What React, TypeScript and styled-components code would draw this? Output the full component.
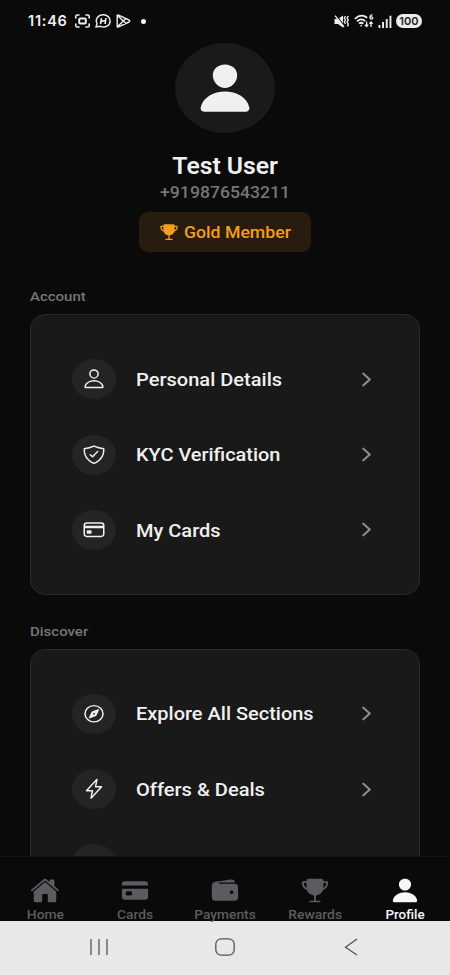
import React from "react";
import styled, { createGlobalStyle } from "styled-components";
import type { IconType } from "react-icons";
import {
  IoPerson, IoTrophy, IoHome, IoCard, IoWallet, IoPersonOutline,
  IoShieldCheckmarkOutline, IoCardOutline, IoCompassOutline, IoFlashOutline,
  IoChevronForward,
} from "react-icons/io5";

const GlobalStyle = createGlobalStyle`
  * { box-sizing: border-box; }
  body { margin: 0; background: #0a0a0a; overflow: hidden; }
`;

const Screen = styled.div`
  width: 450px;
  height: 975px;
  display: flex;
  flex-direction: column;
  overflow: hidden;
  background: #0a0a0a;
  color: #f0f0f0;
  font-family: Roboto, sans-serif;
`;

const StatusBar = styled.header`
  flex: none;
  height: 42px;
  padding: 0 28px;
  display: flex;
  align-items: center;
  justify-content: space-between;
`;

const StatusGroup = styled.div<{ $gap: number }>`
  display: flex;
  align-items: center;
  gap: ${(p) => p.$gap}px;
`;

const Clock = styled.span`
  width: 42px;
  font: 600 14.5px/16px Inter, sans-serif;
  letter-spacing: 0.75px;
  white-space: nowrap;
`;

const Dot = styled.i`
  width: 5px;
  height: 5px;
  margin-left: 5px;
  border-radius: 50%;
  background: #f5f5f5;
`;

const Battery = styled.span`
  width: 26px;
  height: 14px;
  border-radius: 7px;
  background: #ececec;
  color: #222;
  font: 600 11px/14px Inter, sans-serif;
  letter-spacing: 0.1px;
  text-align: center;
`;

const Content = styled.main`
  flex: none;
  height: 814px;
  overflow: hidden;
`;

const Profile = styled.section`
  height: 244px;
  padding-top: 1px;
  display: flex;
  flex-direction: column;
  align-items: center;
`;

const Avatar = styled.div`
  width: 100px;
  height: 90px;
  display: flex;
  align-items: center;
  justify-content: center;
  border-radius: 50%;
  background: #1a1a1a;
`;

const Glyph = styled.svg<{ $w: number; $h: number }>`
  flex: none;
  display: block;
  width: ${(p) => p.$w}px;
  height: ${(p) => p.$h}px;
`;

const Label = styled.span<{ $size: number; $stretch: number; $left?: boolean }>`
  display: block;
  font-size: ${(p) => p.$size}px;
  white-space: nowrap;
  transform: scaleX(${(p) => p.$stretch});
  transform-origin: ${(p) => (p.$left ? "left" : "center")} center;
`;

const UserName = styled(Label)`
  margin-top: 19px;
  line-height: 30px;
  font-weight: 600;
`;

const Phone = styled(Label)`
  line-height: 20px;
  margin-top: 1px;
  color: #76767a;
  font-weight: 500;
`;

const Badge = styled.div`
  width: 172px;
  height: 40px;
  margin-top: 9px;
  padding-left: 20px;
  display: flex;
  align-items: center;
  gap: 5px;
  border-radius: 9px;
  background: #271c0d;
  color: #f59e1b;
  font-weight: 500;
`;

const Section = styled.section`
  padding: 0 30px;
  margin-bottom: 25.5px;
`;

const SectionTitle = styled(Label)`
  line-height: 20px;
  margin-bottom: 8px;
  color: #76767a;
  font-weight: 500;
`;

const Card = styled.div`
  height: 281px;
  padding: 26.5px 41.5px 0 41px;
  border: 1px solid #292929;
  border-radius: 15px;
  background: #191919;
`;

const Row = styled.div`
  height: 75.4px;
  display: flex;
  align-items: center;
  font-weight: 500;
`;

const RowLabel = styled(Label)`
  padding-top: 1.5px;
`;

const IconCircle = styled.span`
  width: 44px;
  height: 40px;
  margin-right: 20px;
  display: flex;
  align-items: center;
  justify-content: center;
  border-radius: 50%;
  background: #242424;

  svg {
    stroke-width: 8px;
  }
`;

const Chevron = styled.span`
  margin-left: auto;
  color: #8f8f90;
`;

const TabBar = styled.nav`
  flex: none;
  height: 65px;
  padding-top: 20px;
  display: grid;
  grid-template-columns: repeat(5, 90px);
  background: #0a0a0a;
  border-top: 1px solid #141414;
`;

const Tab = styled.div<{ $active?: boolean }>`
  display: flex;
  flex-direction: column;
  align-items: center;
  gap: 3px;
  color: ${(p) => (p.$active ? "#f7f7f7" : "#5c5c60")};
  font-weight: 500;
  line-height: 15px;
`;

const SystemBar = styled.footer`
  flex: none;
  height: 54px;
  padding-bottom: 2px;
  display: grid;
  grid-template-columns: 36px repeat(3, 126px) 36px;
  align-items: center;
  justify-items: center;
  background: #e8e8e8;
`;

const SystemButton = styled.span<{ $col: number }>`
  grid-column: ${(p) => p.$col};
`;

interface ShapeProps { icon: IconType; w: number; h: number }
const Shape = ({ icon, w, h }: ShapeProps) => (
  <Glyph as={icon} $w={w} $h={h} preserveAspectRatio="none" />
);

interface Item { label: string; icon: IconType; stretch: number }
const account: Item[] = [
  { label: "Personal Details", icon: IoPersonOutline, stretch: 1.084 },
  { label: "KYC Verification", icon: IoShieldCheckmarkOutline, stretch: 1.076 },
  { label: "My Cards", icon: IoCardOutline, stretch: 1.082 },
];
const discover: Item[] = [
  { label: "Explore All Sections", icon: IoCompassOutline, stretch: 1.08 },
  { label: "Offers & Deals", icon: IoFlashOutline, stretch: 1.085 },
];
const tabs: Item[] = [
  { label: "Home", icon: IoHome, stretch: 1.065 },
  { label: "Cards", icon: IoCard, stretch: 1.06 },
  { label: "Payments", icon: IoWallet, stretch: 1.06 },
  { label: "Rewards", icon: IoTrophy, stretch: 1.07 },
  { label: "Profile", icon: IoPerson, stretch: 1.03 },
];

interface MenuProps { title: string; items: Item[]; more?: boolean }
const Menu = ({ title, items, more }: MenuProps) => (
  <Section>
    <SectionTitle $size={13.5} $stretch={1.11} $left>{title}</SectionTitle>
    <Card>
      {items.map((it) => (
        <Row key={it.label}>
          <IconCircle><Shape icon={it.icon} w={24} h={21.5} /></IconCircle>
          <RowLabel $size={18.5} $stretch={it.stretch} $left>{it.label}</RowLabel>
          <Chevron><Shape icon={IoChevronForward} w={23} h={21} /></Chevron>
        </Row>
      ))}
      {more && <Row><IconCircle /></Row>}
    </Card>
  </Section>
);

export default function App() {
  return (
    <Screen>
      <GlobalStyle />
      <StatusBar>
        <StatusGroup $gap={5}>
          <Clock>11:46</Clock>
          <Glyph $w={15} $h={14} viewBox="0 0 15 14" fill="none" stroke="#eee" strokeWidth="1.6" strokeLinecap="round">
            <path d="M.8 4V2.3Q.8 1 2.2 1H4M11 1h1.8q1.4 0 1.4 1.3V4M.8 10v1.7Q.8 13 2.2 13H4m7 0h1.8q1.4 0 1.4-1.3V10" />
            <rect x="4.2" y="4.6" width="6.6" height="4.8" rx="1" strokeWidth="2" />
          </Glyph>
          <Glyph $w={16} $h={14} viewBox="0 0 16 14" fill="none" stroke="#eee" strokeWidth="1.4">
            <path d="M1 13l1-3.5C-.2 5 3.2.8 8.3.8c4 0 6.8 2.8 6.8 6.2 0 4.6-5 7.4-9.6 5.3z" />
            <path d="M6.4 4L5.6 10M10.9 4l-.8 6M6 7.4l4.5-.9" strokeWidth="1.6" />
          </Glyph>
          <Glyph $w={15} $h={14} viewBox="0 0 15 14" fill="none" stroke="#eee" strokeWidth="1.4" strokeLinejoin="round">
            <path d="M1.2 1.2Q1.6.7 2.5 1.1L13 6q1.6 1 0 2L2.5 12.9q-.9.4-1.3-.1zM1.5 1.5L10 9.4M1.5 12.5L10 4.6" />
          </Glyph>
          <Dot />
        </StatusGroup>
        <StatusGroup $gap={4}>
          <Glyph $w={16} $h={13} viewBox="0 0 16 13" fill="#eee">
            <path d="M.5 4H4L9 .6v11.8L4 9H.5z" />
            <path d="M1.8 0L10.8 11.3" stroke="#0a0a0a" strokeWidth="1.2" />
            <path d="M1 .6L10 12" stroke="#eee" strokeWidth="1.3" />
            <path d="M11.5 1l-1.2 2 1.2 2-1.2 2 1.2 2M14.3 1l-1.2 2 1.2 2-1.2 2 1.2 2-.8 2.5" fill="none" stroke="#eee" strokeWidth="1.4" />
          </Glyph>
          <Glyph $w={20} $h={14} viewBox="0 0 20 14" fill="none" stroke="#eee" strokeWidth="1.7">
            <path d="M.8 4.8Q7-1 13.2 3.7M3 7.3q4.2-3.7 8.3-.1M5 9.7q2.2-1.9 4.4 0" />
            <circle cx="7.2" cy="11.6" r=".9" fill="#eee" stroke="none" />
            <path d="M18.6 1Q16 .5 15.9 3.7q.2 1.5 1.6 1.5 1.3-.1 1.3-1.3-.2-1.4-2.6-.8" strokeWidth="1.2" />
            <path d="M12.6 7.5v5M11 10.8l1.6 1.8 1.6-1.8M17 13V8m-1.6 1.8L17 8l1.6 1.8" strokeWidth="1.3" />
          </Glyph>
          <Glyph $w={14} $h={13} viewBox="0 0 14 13" fill="#eee">
            <path d="M.5 10h1.9v3H.5zM4.1 7H6v6H4.1zM7.8 4h1.9v9H7.8zM11.5.7h1.9V13h-1.9z" />
          </Glyph>
          <Battery>100</Battery>
        </StatusGroup>
      </StatusBar>
      <Content>
        <Profile>
          <Avatar><Shape icon={IoPerson} w={60} h={54} /></Avatar>
          <UserName $size={23} $stretch={1.075}>Test User</UserName>
          <Phone $size={16} $stretch={1.1}>+919876543211</Phone>
          <Badge>
            <Shape icon={IoTrophy} w={20} h={18} />
            <Label $size={16} $stretch={1.105} $left>Gold Member</Label>
          </Badge>
        </Profile>
        <Menu title="Account" items={account} />
        <Menu title="Discover" items={discover} more />
      </Content>
      <TabBar>
        {tabs.map((t) => (
          <Tab key={t.label} $active={t.label === "Profile"}>
            <Shape icon={t.icon} w={30} h={27} />
            <Label $size={13} $stretch={t.stretch}>{t.label}</Label>
          </Tab>
        ))}
      </TabBar>
      <SystemBar>
        <SystemButton $col={2}>
          <Glyph $w={20} $h={18} viewBox="0 0 20 18" stroke="#555" strokeWidth="1.3">
            <path d="M2 1v16M10 1v16M18 1v16" />
          </Glyph>
        </SystemButton>
        <SystemButton $col={3}>
          <Glyph $w={20} $h={18} viewBox="0 0 20 18" fill="none" stroke="#555" strokeWidth="1.3">
            <rect x=".8" y=".8" width="18.4" height="16.4" rx="5.5" />
          </Glyph>
        </SystemButton>
        <SystemButton $col={4}>
          <Glyph $w={14} $h={18} viewBox="0 0 14 18" fill="none" stroke="#555" strokeWidth="1.3">
            <path d="M13 1L1.5 9.2 13 17" />
          </Glyph>
        </SystemButton>
      </SystemBar>
    </Screen>
  );
}
